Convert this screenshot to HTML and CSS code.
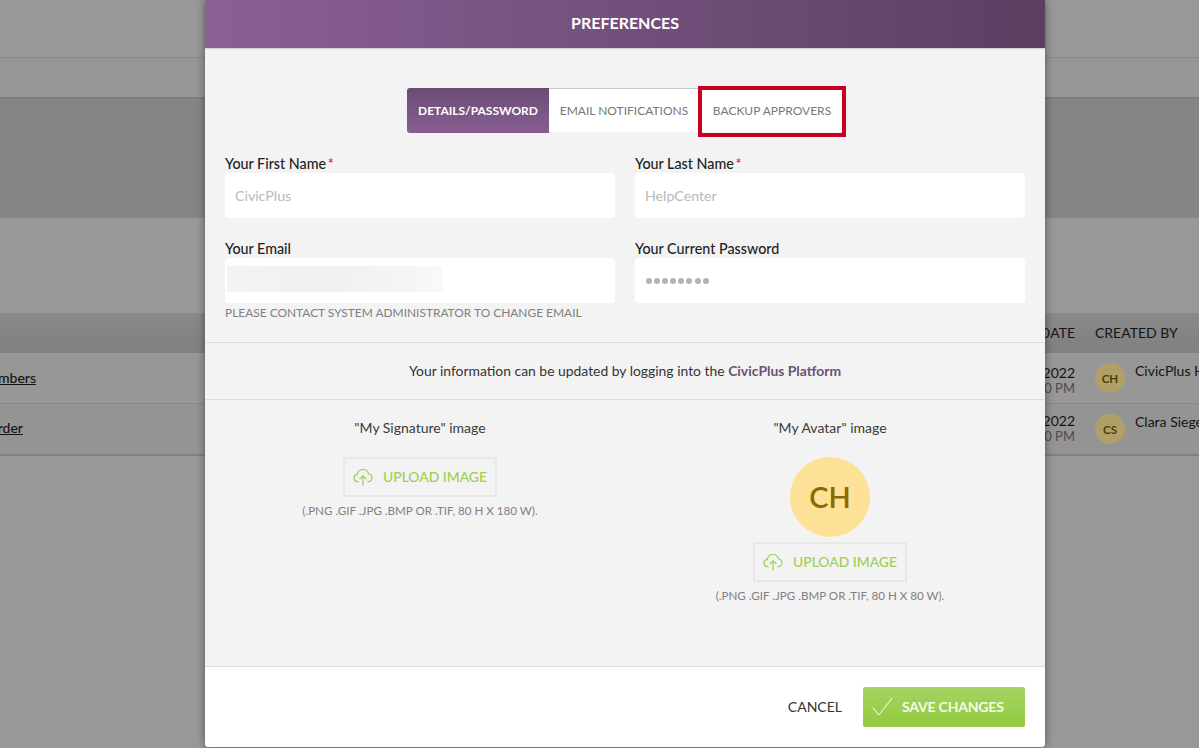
FILE: index.html
```html
<!DOCTYPE html>
<html lang="en">
<head>
<meta charset="utf-8">
<title>Preferences</title>
<link rel="stylesheet" href="styles.css">
</head>
<body>
<div class="page">
  <div class="band band-top"></div>
  <div class="band band-sub"></div>
  <div class="band band-dark"></div>
  <div class="band band-gap"></div>
  <div class="table-head">
    <div class="col-name"></div>
    <div class="col-date">DATE</div>
    <div class="col-by">CREATED BY</div>
  </div>
  <div class="row row-first">
    <div class="col-name"><a class="row-link">Members</a></div>
    <div class="col-date"><div>2022</div><div class="time">00 PM</div></div>
    <div class="col-by"><span class="mini-avatar">CH</span><span class="by-name">CivicPlus HelpCenter</span></div>
  </div>
  <div class="row row-second">
    <div class="col-name col-name-short"><a class="row-link">Order</a></div>
    <div class="col-date"><div>2022</div><div class="time">00 PM</div></div>
    <div class="col-by"><span class="mini-avatar">CS</span><span class="by-name">Clara Siegel</span></div>
  </div>
</div>

<div class="modal">
  <header class="modal-head">PREFERENCES</header>
  <div class="modal-body">
    <nav class="tabs">
      <a class="tab tab-active">DETAILS/PASSWORD</a>
      <a class="tab tab-email">EMAIL NOTIFICATIONS</a>
      <a class="tab tab-backup">BACKUP APPROVERS<span class="callout"></span></a>
    </nav>
    <div class="form-grid">
      <div class="field">
        <label class="label">Your First Name <span class="req">*</span></label>
        <div class="input">CivicPlus</div>
      </div>
      <div class="field">
        <label class="label">Your Last Name <span class="req">*</span></label>
        <div class="input">HelpCenter</div>
      </div>
      <div class="field">
        <label class="label">Your Email</label>
        <div class="input input-email"><span class="blurred"></span></div>
        <div class="hint">PLEASE CONTACT SYSTEM ADMINISTRATOR TO CHANGE EMAIL</div>
      </div>
      <div class="field">
        <label class="label">Your Current Password</label>
        <div class="input input-pass">
          <span class="dot"></span><span class="dot"></span><span class="dot"></span><span class="dot"></span><span class="dot"></span><span class="dot"></span><span class="dot"></span><span class="dot"></span>
        </div>
      </div>
    </div>
    <p class="platform">Your information can be updated by logging into the <a class="platform-link">CivicPlus Platform</a></p>
    <div class="images">
      <section class="image-col">
        <div class="image-title">"My Signature" image</div>
        <button class="upload" type="button">
          <svg class="cloud" viewBox="0 0 20 18" width="20" height="18" aria-hidden="true"><path d="M5.600 13.600H4.800C2.600 13.600 1 12 1 10c0-1.900 1.400-3.400 3.300-3.600C4.900 3.500 7.200 1.500 10 1.500c2.800 0 5 1.900 5.600 4.500 1.900.2 3.400 1.800 3.400 3.800 0 2.100-1.700 3.800-3.800 3.800h-.8" fill="none" stroke="#9ad14f" stroke-width="1.200"/><path d="M10 17.500V8M6.600 11.200 10 7.800l3.400 3.400" fill="none" stroke="#9ad14f" stroke-width="1.200"/></svg>
          <span>UPLOAD IMAGE</span>
        </button>
        <div class="image-hint">(.PNG .GIF .JPG .BMP OR .TIF, 80 H X 180 W).</div>
      </section>
      <section class="image-col">
        <div class="image-title">"My Avatar" image</div>
        <div class="avatar">CH</div>
        <button class="upload upload-avatar" type="button">
          <svg class="cloud" viewBox="0 0 20 18" width="20" height="18" aria-hidden="true"><path d="M5.600 13.600H4.800C2.600 13.600 1 12 1 10c0-1.900 1.400-3.400 3.300-3.600C4.900 3.500 7.200 1.500 10 1.500c2.800 0 5 1.900 5.600 4.500 1.900.2 3.400 1.800 3.400 3.800 0 2.100-1.700 3.800-3.800 3.800h-.8" fill="none" stroke="#9ad14f" stroke-width="1.200"/><path d="M10 17.500V8M6.600 11.200 10 7.800l3.400 3.400" fill="none" stroke="#9ad14f" stroke-width="1.200"/></svg>
          <span>UPLOAD IMAGE</span>
        </button>
        <div class="image-hint">(.PNG .GIF .JPG .BMP OR .TIF, 80 H X 80 W).</div>
      </section>
    </div>
  </div>
  <footer class="modal-foot">
    <a class="cancel">CANCEL</a>
    <button class="save" type="button">
      <svg viewBox="0 0 21 19" width="21" height="19" aria-hidden="true"><path d="M.8 10.500 6.800 18 20.400.8" fill="none" stroke="#fff" stroke-width="1"/></svg>
      <span>SAVE CHANGES</span>
    </button>
  </footer>
</div>
</body>
</html>
```
FILE: styles.css
```css
* { box-sizing: border-box; }
html, body { margin: 0; height: 100%; }
body {
  font-family: "Lato", "Liberation Sans", sans-serif;
  background: #989898;
  overflow: hidden;
  color: #222;
}
.page { width: 1199px; height: 748px; display: flex; flex-direction: column; }
.band { flex: none; }
.band-top { height: 58px; background: #989898; border-bottom: 1px solid #888; }
.band-sub { height: 41px; background: #979797; border-bottom: 2px solid #7e7e7e; }
.band-dark { height: 119px; background: #858585; }
.band-gap { height: 95px; background: #989898; }
.table-head {
  height: 40px;
  flex: none;
  display: flex;
  align-items: center;
  padding-bottom: 2px;
  background: linear-gradient(#898989, #808080);
  font-size: 14px;
  color: #141414;
}
.col-name { width: 36px; flex: none; display: flex; justify-content: flex-end; }
.col-name-short { width: 23px; margin-right: 13px; overflow: hidden; }
.col-date { width: 1039px; flex: none; text-align: right; }
.col-by { margin-left: 20px; flex: none; white-space: nowrap; }
.row {
  flex: none;
  display: flex;
  align-items: center;
  font-size: 14px;
  color: #141414;
}
.row-first { height: 51px; border-bottom: 1px solid #888; background: #979797; }
.row-second { height: 52px; border-bottom: 2px solid #7f7f7f; background: #949494; }
.row-link { text-decoration: underline; white-space: nowrap; font-weight: 500; }
.row-first .col-name { padding-bottom: 2px; }
.row-second .col-name { padding-bottom: 4px; }
.time { font-size: 13px; color: #4c4c4c; line-height: 14px; }
.row .col-date { line-height: 17px; }
.row-first .col-date { padding-top: 2px; }
.row-second .col-date { padding-bottom: 3px; }
.row .col-by { display: flex; align-items: flex-start; gap: 10px; }
.mini-avatar {
  width: 30px;
  height: 30px;
  border-radius: 50%;
  background: #b0a067;
  color: #4d3e08;
  font-size: 11.500px;
  font-weight: 700;
  display: flex;
  align-items: center;
  justify-content: center;
  flex: none;
}
.by-name { margin-top: -2px; line-height: 20px; }

.modal {
  position: absolute;
  left: 205px;
  top: 0;
  width: 840px;
  height: 747px;
  background: #f3f3f3;
  display: flex;
  flex-direction: column;
  border-radius: 0 0 4px 4px;
  box-shadow: 0 0 8px rgba(0, 0, 0, .45);
}
.modal-head {
  height: 48px;
  flex: none;
  display: flex;
  align-items: center;
  justify-content: center;
  padding-bottom: 4px;
  color: #fff;
  font-size: 16px;
  font-weight: 700;
  background: linear-gradient(90deg, #8a6095, #5a3f62);
  box-shadow: 0 1px 1px rgba(0, 0, 0, .12);
}
.modal-body { flex: 1; padding: 40px 20px 0; display: flex; flex-direction: column; }
.tabs { display: flex; justify-content: center; height: 45px; padding-left: 2px; font-size: 12px; }
.tab {
  display: flex;
  align-items: center;
  justify-content: center;
  background: #fff;
  color: #777;
  border-top: 1px solid #c9c9c9;
  height: 44px;
  white-space: nowrap;
}
.tab-active {
  width: 142px;
  height: 45px;
  color: #fff;
  font-weight: 700;
  border: 0;
  border-radius: 3px 0 0 3px;
  background: linear-gradient(#6b4c75, #875e92);
}
.tab-email { width: 150px; }
.tab-backup { width: 146px; position: relative; }
.callout {
  position: absolute;
  left: -1px;
  top: -3px;
  width: 148px;
  height: 51px;
  border: 4px solid #c8001f;
}
.form-grid {
  display: grid;
  grid-template-columns: 390px 390px;
  column-gap: 20px;
  margin-top: 20px;
}
.field { height: 85px; }
.field:nth-child(n+3) { height: 104px; }
.label { display: block; font-size: 14.300px; line-height: 20px; font-weight: 500; color: #222; padding-top: 1px; height: 20px; }
.req { color: #c8344a; margin-left: -2px; }
.input {
  height: 45px;
  background: #fff;
  border-radius: 4px;
  padding: 0 10px;
  font-size: 14.200px;
  color: #b9b9b9;
  display: flex;
  align-items: center;
}
.input-email { padding: 0 2px; align-items: flex-start; }
.blurred {
  display: block;
  width: 216px;
  height: 26px;
  margin-top: 8px;
  filter: blur(.6px);
  background: linear-gradient(90deg, #f3f3f3 0, #f0f0f0 45%, #f4f4f4 80%, #f9f9f9 100%);
}
.input-pass { gap: 2.100px; padding: 1px 0 0 11px; }
.dot { width: 6px; height: 6px; border-radius: 50%; background: #b3b3b3; flex: none; }
.hint { font-size: 11.930px; line-height: 20px; color: #808080; white-space: nowrap; }
.platform {
  margin: 0 -20px;
  height: 58px;
  padding-bottom: 2px;
  border-top: 1px solid #dcdcdc;
  border-bottom: 1px solid #dcdcdc;
  display: flex;
  align-items: center;
  justify-content: center;
  font-size: 13.900px;
  color: #333;
  white-space: pre;
}
.platform-link { color: #6d4f77; font-weight: 700; }
.images { display: grid; grid-template-columns: 390px 390px; column-gap: 20px; }
.image-col { display: flex; flex-direction: column; align-items: center; }
.image-title { margin-top: 19px; font-size: 14px; line-height: 18px; color: #3a3a3a; }
.upload {
  margin-top: 20px;
  width: 154px;
  height: 40px;
  border: 2px solid #e7e7e7;
  border-radius: 2px;
  background: #f3f3f3;
  font: inherit;
  font-size: 13.900px;
  font-weight: 500;
  color: #9ad14f;
  display: flex;
  align-items: center;
  justify-content: flex-start;
  gap: 10px;
  padding: 0 0 2px 8px;
}
.upload .cloud { margin-top: 2px; }
.upload-avatar { margin-top: 5px; }
.cloud { flex: none; }
.image-hint { margin-top: 6px; font-size: 11.600px; line-height: 16px; color: #808080; }
.avatar {
  width: 80px;
  height: 80px;
  margin-top: 20px;
  border-radius: 50%;
  background: #fce196;
  color: #8b6a05;
  font-size: 29px;
  font-weight: 600;
  display: flex;
  align-items: center;
  justify-content: center;
  padding-bottom: 2px;
}
.modal-foot {
  height: 81px;
  flex: none;
  background: #fff;
  border-top: 1px solid #dcdcdc;
  border-radius: 0 0 4px 4px;
  display: flex;
  align-items: center;
  justify-content: flex-end;
  gap: 21px;
  padding: 0 20px;
}
.cancel { font-size: 14px; color: #333; padding-bottom: 2px; }
.save {
  width: 162px;
  height: 40px;
  border: 0;
  border-radius: 2px;
  background: linear-gradient(#a5d463, #92c93f);
  color: #f4fbe9;
  font: inherit;
  font-size: 14px;
  font-weight: 700;
  display: flex;
  align-items: center;
  gap: 9px;
  padding: 0 0 1px 9px;
  letter-spacing: -.2px;
}
```
